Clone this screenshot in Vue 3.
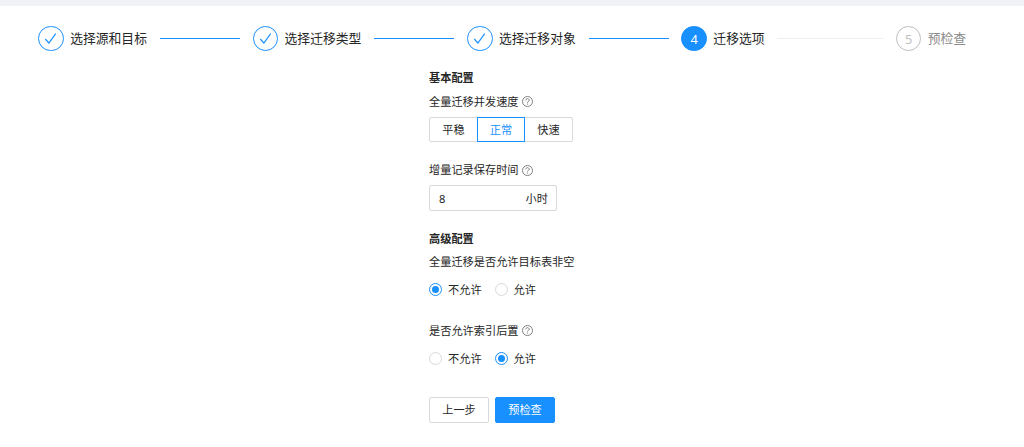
<template>
  <div class="page">
    <div class="steps">
      <div
        v-for="(step, index) in steps"
        :key="step"
        class="step"
        :class="getStatus(index)"
      >
        <div class="step-icon">
          <svg v-if="index < current" viewBox="0 0 13 13" width="13" height="13">
            <path d="M1.3 7 L4.9 11 L11.7 1.7" fill="none" stroke="currentColor" stroke-width="1.15" />
          </svg>
          <span v-else>{{ index + 1 }}</span>
        </div>
        <div class="step-title">{{ step }}</div>
        <div v-if="index < steps.length - 1" class="step-line"></div>
      </div>
    </div>

    <div class="form">
      <!-- 基本配置 -->
      <h4 class="section-title">基本配置</h4>
      <div class="form-label">
        <span>全量迁移并发速度</span>
        <svg class="help" viewBox="0 0 11 11">
          <circle cx="5.5" cy="5.5" r="5" />
          <path d="M3.8 4.4 C3.8 2.1 7.2 2.1 7.2 4.3 C7.2 5.5 5.5 5.3 5.5 6.7 M5.5 7.6 V8.6" />
        </svg>
      </div>
      <div class="speed-group">
        <button
          v-for="item in speeds"
          :key="item"
          class="speed-btn"
          :class="{ active: speed === item }"
          @click="speed = item"
        >{{ item }}</button>
      </div>

      <div class="form-label keep-label">
        <span>增量记录保存时间</span>
        <svg class="help" viewBox="0 0 11 11">
          <circle cx="5.5" cy="5.5" r="5" />
          <path d="M3.8 4.4 C3.8 2.1 7.2 2.1 7.2 4.3 C7.2 5.5 5.5 5.3 5.5 6.7 M5.5 7.6 V8.6" />
        </svg>
      </div>
      <div class="hour-input">
        <input v-model="hours" type="text" />
        <span>小时</span>
      </div>

      <!-- 高级配置 -->
      <h4 class="section-title advanced">高级配置</h4>
      <div class="form-label target-label">
        <span>全量迁移是否允许目标表非空</span>
      </div>
      <div class="radio-group">
        <div v-for="item in options" :key="item" class="radio" @click="allowTarget = item">
          <i class="dot" :class="{ checked: allowTarget === item }"></i>
          <span>{{ item }}</span>
        </div>
      </div>

      <div class="form-label index-label">
        <span>是否允许索引后置</span>
        <svg class="help" viewBox="0 0 11 11">
          <circle cx="5.5" cy="5.5" r="5" />
          <path d="M3.8 4.4 C3.8 2.1 7.2 2.1 7.2 4.3 C7.2 5.5 5.5 5.3 5.5 6.7 M5.5 7.6 V8.6" />
        </svg>
      </div>
      <div class="radio-group">
        <div v-for="item in options" :key="item" class="radio" @click="allowIndex = item">
          <i class="dot" :class="{ checked: allowIndex === item }"></i>
          <span>{{ item }}</span>
        </div>
      </div>

      <div class="actions">
        <button class="btn">上一步</button>
        <button class="btn primary">预检查</button>
      </div>
    </div>
  </div>
</template>

<script setup>
import { ref } from 'vue'

// 步骤条
const steps = ['选择源和目标', '选择迁移类型', '选择迁移对象', '迁移选项', '预检查']
const current = ref(3)

// 表单数据
const speeds = ['平稳', '正常', '快速']
const options = ['不允许', '允许']
const speed = ref('正常')
const hours = ref('8')
const allowTarget = ref('不允许')
const allowIndex = ref('允许')

function getStatus(index) {
  if (index < current.value) return 'finish'
  return index === current.value ? 'process' : 'wait'
}
</script>

<style>
body {
  background: #fff;
}
</style>

<style scoped>
.page {
  box-sizing: border-box;
  height: 447px;
  border-top: 6px solid #f0f2f5;
  background: #fff;
  color: #262626;
  font-family: "Noto Sans", "Noto Sans CJK SC", sans-serif;
  font-size: 11.2px;
}

.page * {
  box-sizing: border-box;
}

/* 步骤条 */
.steps {
  display: flex;
  height: 46px;
  padding: 19.8px 0 0 38.2px;
}

.step {
  display: flex;
  align-items: center;
  flex: none;
  width: 214.4px;
  height: 25.6px;
}

.step:last-child {
  width: auto;
}

.step-icon {
  display: flex;
  align-items: center;
  justify-content: center;
  flex: none;
  width: 25.6px;
  height: 25.6px;
  margin-right: 6.4px;
  border: 1px solid #1890ff;
  border-radius: 50%;
  color: #1890ff;
  font-size: 12.8px;
}

.step-title {
  font-size: 12.8px;
  line-height: 25.6px;
  white-space: nowrap;
}

.step-line {
  flex: 1;
  height: 1px;
  margin: 0 12.8px;
  background: #1890ff;
}

.process .step-icon {
  background: #1890ff;
  color: #fff;
}

.process .step-line {
  background: #f0f0f0;
}

.wait .step-icon {
  border-color: #bfbfbf;
  color: #bfbfbf;
}

.wait .step-title {
  color: #8c8c8c;
}

/* 表单 */
.form {
  width: 160px;
  margin: 17px 0 0 429px;
}

.section-title {
  height: 18px;
  margin: 0;
  font-size: 11.2px;
  font-weight: 600;
  line-height: 18px;
}

.form-label {
  display: flex;
  align-items: center;
  height: 18px;
  margin-top: 6px;
  line-height: 18px;
  white-space: nowrap;
}

.help {
  width: 11px;
  height: 11px;
  margin: 0 0 1px 3px;
  fill: none;
  stroke: #808080;
  stroke-width: 1;
}

.speed-group {
  display: flex;
  margin-top: 6px;
}

button {
  padding: 0;
  border: 1px solid #d9d9d9;
  background: #fff;
  color: #262626;
  font-family: inherit;
  font-size: 11.2px;
  cursor: pointer;
}

.speed-btn {
  width: 49px;
  height: 25px;
  line-height: 23px;
}

.speed-btn + .speed-btn {
  width: 48px;
  margin-left: -1px;
}

.speed-btn:first-child {
  border-radius: 2px 0 0 2px;
}

.speed-btn:last-child {
  border-radius: 0 2px 2px 0;
}

.speed-group .speed-btn:last-child {
  width: 49px;
}

.speed-btn.active {
  z-index: 1;
  border-color: #1890ff;
  color: #1890ff;
}

.keep-label {
  margin-top: 19px;
}

.keep-label .help {
  margin-bottom: -1px;
}

.hour-input {
  display: flex;
  align-items: center;
  width: 128px;
  height: 26px;
  margin-top: 6px;
  padding: 0 8px 0 9px;
  border: 1px solid #d9d9d9;
  border-radius: 2px;
}

.hour-input input {
  flex: 1;
  min-width: 0;
  padding: 0;
  border: none;
  outline: none;
  color: #262626;
  font-family: inherit;
  font-size: 11.2px;
}

.advanced {
  margin-top: 19px;
}

.target-label {
  margin-top: 5px;
}

.radio-group {
  display: flex;
  gap: 13px;
  height: 18px;
  margin-top: 10px;
}

.radio {
  display: flex;
  align-items: center;
  line-height: 18px;
  cursor: pointer;
}

.dot {
  display: flex;
  align-items: center;
  justify-content: center;
  width: 13px;
  height: 13px;
  margin: 0 6px 1px 0;
  border: 1px solid #d9d9d9;
  border-radius: 50%;
}

.dot.checked {
  border-color: #1890ff;
}

.dot.checked::after {
  width: 7px;
  height: 7px;
  border-radius: 50%;
  background: #1890ff;
  content: '';
}

.index-label {
  margin-top: 23px;
}

.actions {
  display: flex;
  gap: 6px;
  margin-top: 29px;
}

.btn {
  width: 60px;
  height: 26px;
  border-radius: 2px;
  line-height: 24px;
}

.btn.primary {
  border-color: #1890ff;
  background: #1890ff;
  color: #fff;
}
</style>
